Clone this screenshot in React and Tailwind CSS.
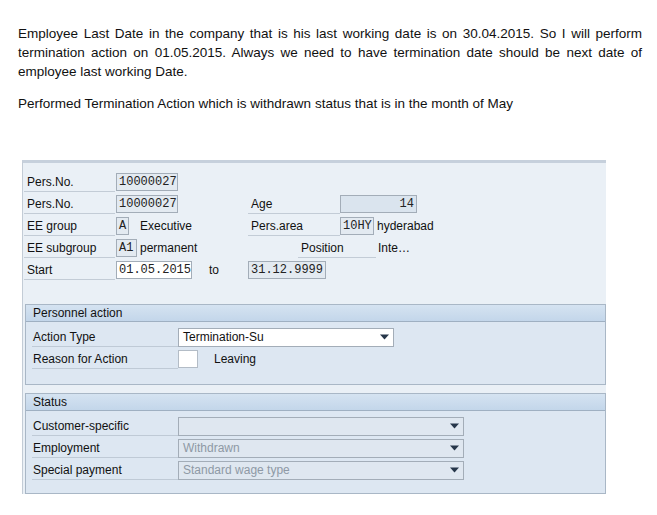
import React from "react";

const sans = { fontFamily: '"Liberation Sans", Arial, sans-serif' };
const mono = { fontFamily: '"Liberation Mono", "Courier New", monospace' };

function Caret() {
  return (
    <svg width="9" height="6" viewBox="0 0 9 6" className="shrink-0">
      <path d="M0 0.5 L9 0.5 L4.5 5.5 Z" fill="#26364a" />
    </svg>
  );
}

function Label({ w, children, className = "" }) {
  return (
    <div
      className={`h-[20px] flex items-center border-b border-[#c3ccd6] pl-[3px] shrink-0 ${className}`}
      style={{ width: w }}
    >
      {children}
    </div>
  );
}

function Field({ w, children, white, right, bg }) {
  return (
    <div
      className={`h-[18px] border border-[#a3adb8] flex items-center px-[2px] text-[12px] text-[#222] shrink-0 ${right ? "justify-end" : ""} ${white ? "bg-white" : bg || "bg-[#e3eaf1]"}`}
      style={{ width: w, ...mono }}
    >
      {children}
    </div>
  );
}

function Dropdown({ w, text, disabled }) {
  return (
    <div
      className={`h-[19px] border border-[#a3adb8] flex items-center justify-between pl-[4px] pr-[4px] shrink-0 ${disabled ? "bg-[#dfe7f0] text-[#8e99a5]" : "bg-white text-[#111]"}`}
      style={{ width: w }}
    >
      <span>{text}</span>
      <Caret />
    </div>
  );
}

function GroupRow({ label, children }) {
  return (
    <div className="h-[22px] flex items-center">
      <div className="w-[146px] h-[20px] flex items-center border-b border-[#bfcad6] pl-[1px] shrink-0">
        {label}
      </div>
      <div className="flex items-center">{children}</div>
    </div>
  );
}

function Group({ title, children, pb }) {
  return (
    <div className="border border-[#a9b7c6] bg-[#dde7f2]">
      <div className="h-[17px] flex items-center pl-[7px] border-b border-[#9fb0c2] bg-gradient-to-b from-[#d5e3f1] to-[#c3d6ea] text-[#111]">
        {title}
      </div>
      <div className={`pl-[6px] pt-[4px] ${pb}`}>{children}</div>
    </div>
  );
}

export default function App() {
  return (
    <div className="w-[657px] h-[515px] bg-white overflow-hidden text-[12px] text-[#111]" style={sans}>
      <div className="pt-[24px] pl-[18px] pr-[15px] text-[13.5px] leading-[19px] text-[#111]">
        <p className="text-justify">
          Employee Last Date in the company that is his last working date is on 30.04.2015. So I will perform termination action on 01.05.2015. Always we need to have termination date should be next date of employee last working Date.
        </p>
        <p className="mt-[13px]">
          Performed Termination Action which is withdrawn status that is in the month of May
        </p>
      </div>

      <div className="ml-[22px] mt-[47px] w-[584px] h-[334px] border-l border-[#c3ccd6] border-t-[3px] border-t-[#c6d0dc] bg-[#eaf0f6]">
        <div className="pt-[8px] pl-[1px] text-[12px]">
          <div className="h-[22px] flex items-center">
            <Label w={91}>Pers.No.</Label>
            <div className="ml-[1px]"><Field w={62}>10000027</Field></div>
          </div>
          <div className="h-[22px] flex items-center">
            <div className="w-[224px] flex items-center shrink-0">
              <Label w={91}>Pers.No.</Label>
              <div className="ml-[1px]"><Field w={62}>10000027</Field></div>
            </div>
            <Label w={92}>Age</Label>
            <Field w={77} right bg="bg-[#dae4ee]">14</Field>
          </div>
          <div className="h-[22px] flex items-center">
            <div className="w-[224px] flex items-center shrink-0">
              <Label w={91}>EE group</Label>
              <div className="ml-[1px]"><Field w={13}>A</Field></div>
              <span className="ml-[11px]">Executive</span>
            </div>
            <Label w={92}>Pers.area</Label>
            <Field w={34}>10HY</Field>
            <span className="ml-[3px]">hyderabad</span>
          </div>
          <div className="h-[22px] flex items-center">
            <div className="w-[224px] flex items-center shrink-0">
              <Label w={91}>EE subgroup</Label>
              <div className="ml-[1px]"><Field w={21}>A1</Field></div>
              <span className="ml-[3px]">permanent</span>
            </div>
            <div className="w-[50px] shrink-0" />
            <Label w={78}>Position</Label>
            <span className="ml-[2px]">Inte…</span>
          </div>
          <div className="h-[22px] flex items-center">
            <div className="w-[224px] flex items-center shrink-0">
              <Label w={91}>Start</Label>
              <div className="ml-[1px]"><Field w={76} white>01.05.2015</Field></div>
              <span className="ml-[17px]">to</span>
            </div>
            <Field w={78}>31.12.9999</Field>
          </div>
        </div>

        <div className="mt-[23px] pl-[2px]">
          <Group title="Personnel action" pb="pb-[14px]">
            <GroupRow label="Action Type">
              <Dropdown w={216} text="Termination-Su" />
            </GroupRow>
            <GroupRow label="Reason for Action">
              <div className="w-[20px] h-[18px] bg-white border border-[#b3bcc6]" />
              <span className="ml-[16px]">Leaving</span>
            </GroupRow>
          </Group>
          <div className="h-[8px]" />
          <Group title="Status" pb="pb-[12px]">
            <GroupRow label="Customer-specific">
              <Dropdown w={286} text="" disabled />
            </GroupRow>
            <GroupRow label="Employment">
              <Dropdown w={286} text="Withdrawn" disabled />
            </GroupRow>
            <GroupRow label="Special payment">
              <Dropdown w={286} text="Standard wage type" disabled />
            </GroupRow>
          </Group>
        </div>
      </div>
    </div>
  );
}
